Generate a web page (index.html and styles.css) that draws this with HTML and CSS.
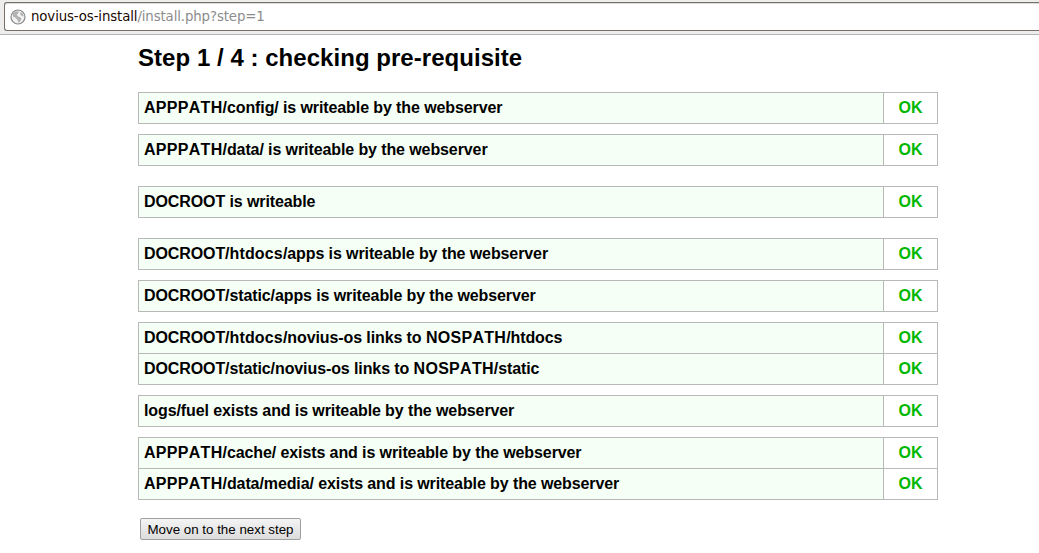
FILE: index.html
```html
<!DOCTYPE html>
<html lang="en">
<head>
<meta charset="utf-8">
<title>Step 1 / 4</title>
<link rel="stylesheet" href="styles.css">
</head>
<body>
<header class="toolbar">
  <div class="address">
    <svg class="globe" width="16" height="16" viewBox="0 0 16 16"><circle cx="8" cy="8" r="7" fill="#f2f2f2" stroke="#888" stroke-width="1.2"/><path d="M2.5 5 5 2.4 8.4 2.2 9 3.6 7 5.2 7.4 7 9.6 8 11.6 9.4 10.4 12.2 8.4 13.8 7.6 11 5.4 8.8 3 7.6ZM10.4 3 12.6 4.4 13.8 7.2 12 7 10.2 5.4Z" fill="#b2b2b2"/></svg>
    <span class="url"><span class="host">novius-os-install</span>/install.php?step=1</span>
  </div>
</header>
<main class="page">
  <h1>Step 1 / 4 : checking pre-requisite</h1>
  <table><tr><td><span class="root">APPPATH</span>/config/ is writeable by the webserver</td><td class="ok">OK</td></tr></table>
  <table><tr><td><span class="root">APPPATH</span>/data/ is writeable by the webserver</td><td class="ok">OK</td></tr></table>
  <table class="apart"><tr><td>DOCROOT is writeable</td><td class="ok">OK</td></tr></table>
  <table class="apart"><tr><td>DOCROOT/<span class="dir">htdocs</span>/apps is writeable by the webserver</td><td class="ok">OK</td></tr></table>
  <table><tr><td>DOCROOT/static/apps is writeable by the webserver</td><td class="ok">OK</td></tr></table>
  <table><tr><td>DOCROOT/<span class="dir">htdocs</span>/novius-os links to <span class="root">NOSPATH</span>/htdocs</td><td class="ok">OK</td></tr><tr><td>DOCROOT/static/novius-os links to <span class="root">NOSPATH</span>/static</td><td class="ok">OK</td></tr></table>
  <table><tr><td>logs/fuel exists and is writeable by the webserver</td><td class="ok">OK</td></tr></table>
  <table><tr><td><span class="root">APPPATH</span>/cache/ exists and is writeable by the webserver</td><td class="ok">OK</td></tr><tr><td><span class="root">APPPATH</span>/data/media/ exists and is writeable by the webserver</td><td class="ok">OK</td></tr></table>
  <button class="next">Move on to the next step</button>
</main>
</body>
</html>
```

FILE: styles.css
```css
body { margin: 0; background: #fff; color: #000; font-family: "Liberation Sans", Arial, sans-serif; overflow: hidden; }
.toolbar { box-sizing: border-box; height: 35px; padding: 2px 0 0 4px; background: #ededeb; border-bottom: 1px solid #b5b5b5; }
.address { box-sizing: border-box; display: flex; align-items: center; height: 29px; padding-left: 5px; gap: 5px; background: #fff; border: 1px solid #776f69; border-right: 0; border-radius: 3px 0 0 3px; box-shadow: inset 0 1px #dedcda; }
.url { font: 13.33px "DejaVu Sans", sans-serif; letter-spacing: -0.12px; color: #8c8c8c; }
.host { color: #1a0a00; }
.page { width: 800px; margin-left: 138px; }
h1 { margin: 0 0 20px; padding-top: 8px; font-size: 24px; line-height: 29px; letter-spacing: 0.04px; }
table { width: 800px; margin-bottom: 10px; border-collapse: collapse; table-layout: fixed; font-size: 16px; font-weight: bold; font-kerning: none; letter-spacing: -0.1px; }
table.apart { margin-top: 20px; }
td { height: 20px; padding: 5px; line-height: 20px; border: 1px solid #b8b8b8; background: #f5fff5; }
.root { letter-spacing: 0.3px; }
.dir { letter-spacing: 0.18px; }
td.ok { width: 43px; text-align: center; letter-spacing: 0; color: #00b800; background: #fff; }
.next { display: block; box-sizing: border-box; width: 161px; height: 22px; margin: 18px 0 0 2px; padding: 0; font: 13.33px "Liberation Sans", sans-serif; color: #000; background: linear-gradient(#f4f4f4, #dcdcdc); border: 1px solid #a0a0a0; border-radius: 2px; }
```
